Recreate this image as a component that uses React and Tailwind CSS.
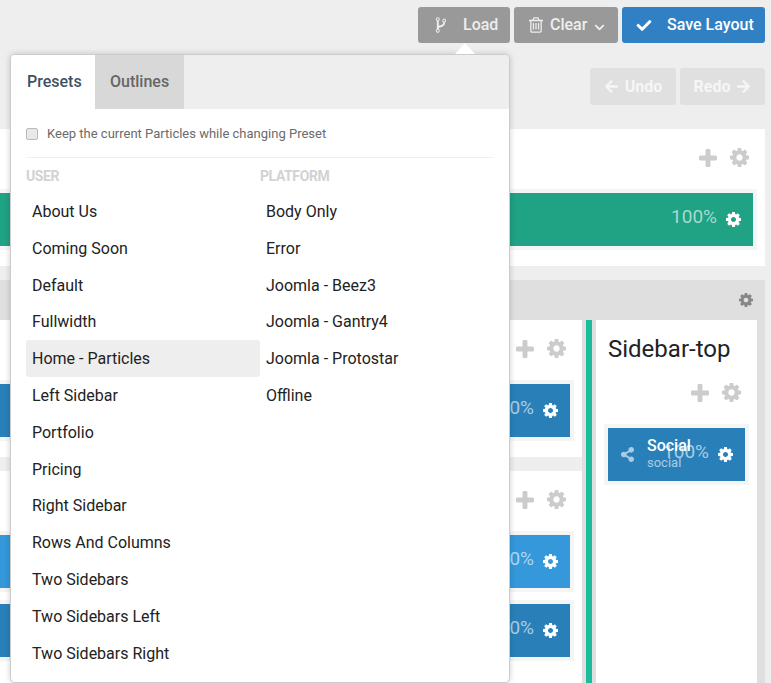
import React from 'react';
import { FaCheck, FaArrowLeft, FaArrowRight, FaChevronDown, FaShareAlt } from 'react-icons/fa';

const userPresets = [
  'About Us', 'Coming Soon', 'Default', 'Fullwidth', 'Home - Particles', 'Left Sidebar', 'Portfolio',
  'Pricing', 'Right Sidebar', 'Rows And Columns', 'Two Sidebars', 'Two Sidebars Left', 'Two Sidebars Right',
];
const platformPresets = ['Body Only', 'Error', 'Joomla - Beez3', 'Joomla - Gantry4', 'Joomla - Protostar', 'Offline'];

const CogIcon = ({ className }) => (
  <svg viewBox="128 128 1536 1536" fill="currentColor" className={className}>
    <path d="M1152 896q0-106-75-181t-181-75-181 75-75 181 75 181 181 75 181-75 75-181zm512-109v222q0 12-8 23t-20 13l-185 28q-19 54-39 91 35 50 107 138 10 12 10 25t-9 23q-27 37-99 108t-94 71q-12 0-26-9l-138-108q-44 23-91 38-16 136-29 186-7 28-36 28h-222q-14 0-24.5-8.5t-11.5-21.5l-28-184q-49-16-90-37l-141 107q-10 9-25 9-14 0-25-11-126-114-165-168-7-10-7-23 0-12 8-23 15-21 51-66.5t54-70.5q-27-50-41-99l-183-27q-13-2-21-12.5t-8-23.5v-222q0-12 8-23t19-13l186-28q14-46 39-92-40-57-107-138-10-12-10-24 0-10 9-23 26-36 98.5-107.5t94.5-71.5q13 0 26 10l138 107q44-23 91-38 16-136 29-186 7-28 36-28h222q14 0 24.5 8.5t11.5 21.5l28 184q49 16 90 37l142-107q9-9 24-9 13 0 25 10 129 119 165 170 7 8 7 22 0 12-8 23-15 21-51 66.5t-54 70.5q26 50 41 98l183 28q13 2 21 12.5t8 23.5z" />
  </svg>
);

const PlusIcon = ({ className }) => (
  <svg viewBox="192 128 1408 1408" fill="currentColor" className={className}>
    <path d="M1600 736v192q0 40-28 68t-68 28h-416v416q0 40-28 68t-68 28h-192q-40 0-68-28t-28-68v-416h-416q-40 0-68-28t-28-68v-192q0-40 28-68t68-28h416v-416q0-40 28-68t68-28h192q40 0 68 28t28 68v416h416q40 0 68 28t28 68z" />
  </svg>
);

const ForkIcon = ({ className }) => (
  <svg viewBox="0 0 1792 1792" fill="currentColor" className={className}>
    <path d="M672 1472q0-40-28-68t-68-28-68 28-28 68 28 68 68 28 68-28 28-68zm0-1152q0-40-28-68t-68-28-68 28-28 68 28 68 68 28 68-28 28-68zm640 128q0-40-28-68t-68-28-68 28-28 68 28 68 68 28 68-28 28-68zm96 0q0 52-26 96.5t-70 69.5q-2 287-226 414-67 38-203 81-128 40-169.5 71t-41.5 100v26q44 25 70 69.5t26 96.5q0 80-56 136t-136 56-136-56-56-136q0-52 26-96.5t70-69.5v-820q-44-25-70-69.5t-26-96.5q0-80 56-136t136-56 136 56 56 136q0 52-26 96.5t-70 69.5v497q54-26 154-57 55-17 87.5-29.5t70.5-31 59-39.5 40.5-51 28-69.5 8.5-91.5q-44-25-70-69.5t-26-96.5q0-80 56-136t136-56 136 56 56 136z" />
  </svg>
);

const TrashIcon = ({ className }) => (
  <svg viewBox="0 0 1792 1792" fill="currentColor" className={className}>
    <path d="M704 736v576q0 14-9 23t-23 9h-64q-14 0-23-9t-9-23v-576q0-14 9-23t23-9h64q14 0 23 9t9 23zm256 0v576q0 14-9 23t-23 9h-64q-14 0-23-9t-9-23v-576q0-14 9-23t23-9h64q14 0 23 9t9 23zm256 0v576q0 14-9 23t-23 9h-64q-14 0-23-9t-9-23v-576q0-14 9-23t23-9h64q14 0 23 9t9 23zm128 724v-948h-896v948q0 22 7 40.5t14.5 27 10.5 8.5h832q3 0 10.5-8.5t14.5-27 7-40.5zm-672-1076h448l-48-117q-7-9-17-11h-317q-10 2-17 11zm928 32v64q0 14-9 23t-23 9h-96v948q0 83-47 143.5t-113 60.5h-832q-66 0-113-58.5t-47-141.5v-952h-96q-14 0-23-9t-9-23v-64q0-14 9-23t23-9h309l70-167q15-37 54-63t79-26h320q40 0 79 26t54 63l70 167h309q14 0 23 9t9 23z" />
  </svg>
);

const Particle = ({ color, percentColor, className = '', children }) => (
  <div className={`border-4 border-[#f5f5f5] ${className}`}>
    <div className={`relative flex h-[53px] items-center justify-end pr-3 ${color}`}>
      {children}
      <span className={`mb-[6px] text-[19px] leading-none ${percentColor}`}>100%</span>
      <CogIcon className="ml-[9px] h-[15px] w-[15px] text-white" />
    </div>
  </div>
);

const BlockTools = () => (
  <div className="flex h-[17px] items-center justify-end gap-[13px] pr-2 text-[#ccc]">
    <PlusIcon className="h-[18px] w-[18px]" />
    <CogIcon className="h-[19px] w-[19px]" />
  </div>
);

const Block = ({ children, className = '' }) => (
  <div className={`bg-white pb-4 pr-2 pt-5 ${className}`}>
    <BlockTools />
    <div className="mt-[23px] flex flex-col gap-2">{children}</div>
  </div>
);

const PresetList = ({ title, items }) => (
  <div className="w-[234px]">
    <div className="mb-[9px] text-sm font-bold leading-4 tracking-[-0.4px] text-[#d2d2d2]">{title}</div>
    {items.map((item) => (
      <div
        key={item}
        className={`h-[36.8px] rounded-[3px] pl-1.5 text-base leading-[38px] text-[#222] ${item === 'Home - Particles' ? 'bg-[#eee]' : ''}`}
      >
        {item}
      </div>
    ))}
  </div>
);

export default function App() {
  return (
    <div className="relative h-[683px] w-[771px] overflow-hidden bg-[#eee] pr-1.5 pt-[7px] font-['Roboto',sans-serif]">
      {/* Top actions */}
      <div className="flex justify-end gap-1 text-base font-medium">
        <button className="flex h-9 w-[92px] items-center rounded-[3px] bg-[#999] pl-[14px] text-[#eee]">
          <ForkIcon className="h-[18px] w-[18px]" />
          <span className="ml-[13px]">Load</span>
        </button>
        <button className="flex h-9 w-[104px] items-center rounded-[3px] bg-[#999] pl-[13px] text-[#eee]">
          <TrashIcon className="h-[18px] w-[18px]" />
          <span className="ml-[5px]">Clear</span>
          <FaChevronDown className="ml-[7px] mt-1 h-[11px] w-[11px]" />
        </button>
        <button className="flex h-9 w-[143px] items-center rounded-[3px] bg-[#3280c4] pl-[14px] text-white">
          <FaCheck className="h-[15px] w-[16px]" />
          <span className="ml-[15px]">Save Layout</span>
        </button>
      </div>

      <div className="mt-[25px] flex justify-end gap-1 text-base font-bold text-[#f6f6f6]">
        <button className="flex h-[37px] w-[86px] items-center justify-center gap-1.5 rounded-[3px] bg-[#e0e0e0]">
          <FaArrowLeft className="h-[15px] w-[15px]" />
          Undo
        </button>
        <button className="flex h-[37px] w-[85px] items-center justify-center gap-1.5 rounded-[3px] bg-[#e0e0e0]">
          Redo
          <FaArrowRight className="h-[15px] w-[15px]" />
        </button>
      </div>

      {/* Layout sections */}
      <Block className="mt-6">
        <Particle color="bg-[#20a284]" percentColor="text-[#a6dacd]" className="border-l-0" />
      </Block>

      <div className="mt-[14px] bg-[#dfdfdf]">
        <div className="flex h-10 items-center justify-end pr-3 text-[#868686]">
          <CogIcon className="h-[14px] w-[14px]" />
        </div>
        <div className="flex h-[363px] pr-2">
          <div className="flex w-[582px] flex-col bg-[#eee]">
            <Block>
              <Particle color="bg-[#2980b9]" percentColor="text-[#a9cce3]" className="border-l-0" />
            </Block>
            <Block className="mt-[14px] flex-1">
              <Particle color="bg-[#3498db]" percentColor="text-[#aed6f1]" className="border-l-0" />
              <Particle color="bg-[#2980b9]" percentColor="text-[#a9cce3]" className="border-l-0" />
            </Block>
          </div>
          <div className="ml-1 w-1.5 bg-[#1abc9c]" />
          <div className="ml-1 flex-1 bg-white">
            <h2 className="pl-3 pt-[15px] text-2xl leading-[29px] text-[#222]">Sidebar-top</h2>
            <Block className="pl-2">
              <Particle color="bg-[#2980b9]" percentColor="text-[#a9cce3]">
                <div className="absolute left-3 top-0 flex h-full items-center">
                  <FaShareAlt className="h-[15px] w-[15px] text-[#a9cce3]" />
                  <div className="mb-[3px] ml-3 flex flex-col">
                    <span className="text-base font-medium leading-[17px] text-white">Social</span>
                    <span className="mt-[2px] text-[13px] leading-[13px] text-[#a9cce3]">social</span>
                  </div>
                </div>
              </Particle>
            </Block>
          </div>
        </div>
      </div>

      {/* Load popover */}
      <div className="absolute left-[455px] top-[43px] z-20 h-0 w-0 border-x-[10px] border-b-[11px] border-x-transparent border-b-white" />
      <div className="absolute left-[10px] top-[54px] z-10 h-[629px] w-[500px] overflow-hidden rounded-[5px] border border-[#ccc] bg-white shadow-[0_0_6px_rgba(0,0,0,0.18)]">
        <div className="flex h-[54px] bg-[#eee] text-base font-medium leading-[54px]">
          <div className="w-[84px] bg-white pl-4 text-[#3d5163]">Presets</div>
          <div className="w-[89px] bg-[#d8d8d8] pl-[15px] text-[#666]">Outlines</div>
        </div>
        <div className="mx-[15px]">
          <label className="flex h-[49px] items-center border-b border-[#f0f0f0] pt-[2px] text-[13px] text-[#6b6b6b]">
            <span className="h-3 w-3 rounded-[2px] border border-[#bbb] bg-[#e8e8e8]" />
            <span className="ml-[9px]">Keep the current Particles while changing Preset</span>
          </label>
          <div className="mt-[10px] flex">
            <PresetList title="USER" items={userPresets} />
            <PresetList title="PLATFORM" items={platformPresets} />
          </div>
        </div>
      </div>
    </div>
  );
}
